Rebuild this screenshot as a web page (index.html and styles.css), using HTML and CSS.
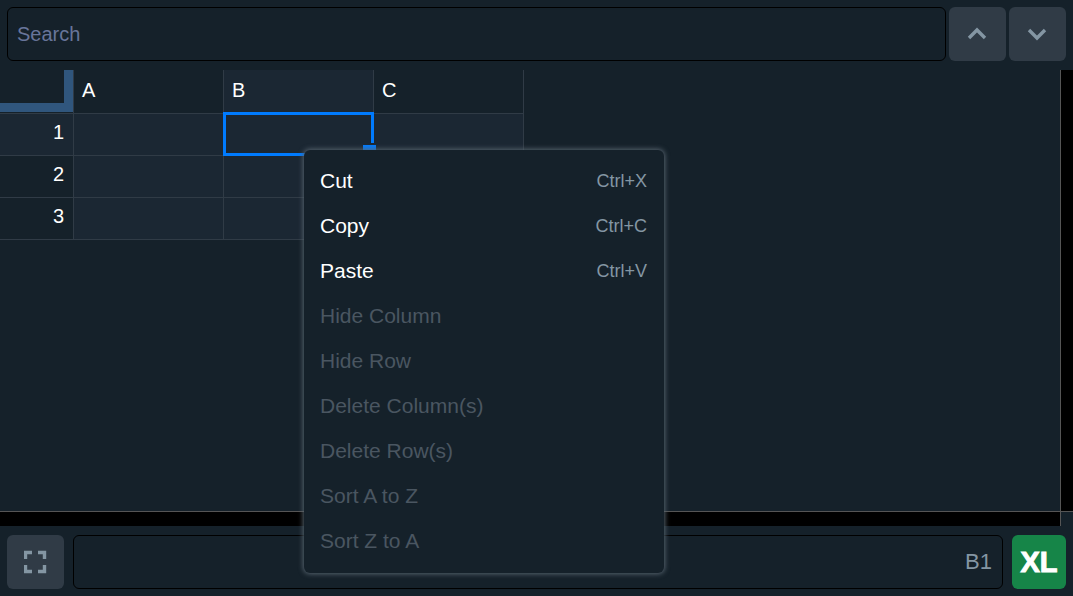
FILE: index.html
```html
<!DOCTYPE html>
<html lang="en">
    <head>
        <meta charset="utf-8">
        <title>Sheet</title>
        <meta name="viewport" content="width=device-width, initial-scale=1">
        <link rel="stylesheet" href="styles.css">
    </head>
    <body>
        <div class="toolbar">
            <input class="search" type="text" placeholder="Search" aria-label="Search">
            <button class="button" type="button" aria-label="Previous match">
                <svg width="24" height="24" viewBox="0 0 24 24"><path d="M3 16L11 8L19 16"/></svg>
            </button>
            <button class="button" type="button" aria-label="Next match">
                <svg width="24" height="24" viewBox="0 0 24 24"><path d="M3 8L11 16L19 8"/></svg>
            </button>
        </div>

        <div class="workspace">
            <div class="sheet">
                <table class="grid">
                    <thead>
                        <tr>
                            <td class="corner"><div class="cornerMark"></div></td>
                            <th class="colHead" scope="col">A</th>
                            <th class="colHead active" scope="col">B</th>
                            <th class="colHead" scope="col">C</th>
                        </tr>
                    </thead>
                    <tbody>
                        <tr>
                            <th class="rowHead active" scope="row">1</th>
                            <td></td>
                            <td class="selected"><div class="selection"><span class="handle"></span></div></td>
                            <td></td>
                        </tr>
                        <tr>
                            <th class="rowHead" scope="row">2</th>
                            <td></td>
                            <td></td>
                            <td></td>
                        </tr>
                        <tr>
                            <th class="rowHead" scope="row">3</th>
                            <td></td>
                            <td></td>
                            <td></td>
                        </tr>
                    </tbody>
                </table>
            </div>
            <div class="trackY"></div>
            <div class="trackX"></div>
            <div class="trackCorner"></div>
        </div>

        <div class="statusbar">
            <button class="button" type="button" aria-label="Fullscreen">
                <svg width="24" height="24" viewBox="0 0 24 24"><path d="M1.5 9V2.5H8M14 2.5H20.5V9M20.5 15V21.5H14M8 21.5H1.5V15"/></svg>
            </button>
            <label class="formula">
                <input type="text" aria-label="Cell value">
                <span class="cellName">B1</span>
            </label>
            <button class="logo" type="button">XL</button>
        </div>

        <div class="menu">
            <button type="button">Cut <span class="shortcut">Ctrl+X</span></button>
            <button type="button">Copy <span class="shortcut">Ctrl+C</span></button>
            <button type="button">Paste <span class="shortcut">Ctrl+V</span></button>
            <button type="button" disabled>Hide Column</button>
            <button type="button" disabled>Hide Row</button>
            <button type="button" disabled>Delete Column(s)</button>
            <button type="button" disabled>Delete Row(s)</button>
            <button type="button" disabled>Sort A to Z</button>
            <button type="button" disabled>Sort Z to A</button>
        </div>
    </body>
</html>
```
FILE: styles.css
```css
* {
    box-sizing: border-box;
    font-family: "Liberation Sans", Arial, sans-serif;
}

html, body {
    height: 100%;
    margin: 0;
}

body {
    display: flex;
    flex-direction: column;
    overflow: hidden;
    background: #15212a;
    color: #fff;
    font-size: 20px;
}

button, input {
    margin: 0;
    border: 0;
    padding: 0;
    background: none;
    color: inherit;
    font-size: 20px;
    outline: 0;
}

.toolbar, .statusbar {
    display: flex;
    flex: none;
}

.toolbar {
    gap: 3px;
    padding: 7px 7px 9px;
}

.statusbar {
    gap: 9px;
    padding: 9px 7px 7px;
}

.search, .formula {
    flex: 1;
    min-width: 0;
    height: 54px;
    border: 1px solid #000;
    border-radius: 6px;
    padding: 0 9px;
}

.search::placeholder {
    color: #68759a;
    opacity: 1;
}

.button {
    display: flex;
    align-items: center;
    justify-content: center;
    width: 57px;
    height: 54px;
    border-radius: 6px;
    background: #303b46;
}

.button svg {
    fill: none;
    stroke: #8496a3;
    stroke-width: 3.4;
}

.workspace {
    flex: 1;
    min-height: 0;
    display: grid;
    grid-template-columns: 1fr 13px;
    grid-template-rows: 1fr 15px;
}

.sheet {
    overflow: hidden;
}

.trackY {
    border-left: 1px solid #555;
    background: #000;
}

.trackX {
    border-top: 1px solid #555;
    background: #000;
}

.trackCorner {
    border-top: 1px solid #555;
    border-left: 1px solid #555;
}

.grid {
    border-collapse: separate;
    border-spacing: 0;
    table-layout: fixed;
    width: 524px;
}

.grid th, .grid td {
    height: 42px;
    border-right: 1px solid #303b46;
    border-bottom: 1px solid #303b46;
    padding: 0 8px;
    font-weight: normal;
    line-height: 24px;
}

.grid tbody td {
    background: #1b2733;
}

.grid .colHead {
    height: 44px;
    width: 150px;
    text-align: left;
    padding-bottom: 4px;
}

.grid .rowHead {
    padding-bottom: 6px;
    padding-right: 9px;
    text-align: right;
}

.grid .active {
    background: #1b2733;
}

.grid .corner {
    width: 74px;
    padding: 0 0 1px;
}

.cornerMark {
    height: 42px;
    border-right: 9px solid #30567d;
    border-bottom: 9px solid #30567d;
}

.selected {
    position: relative;
}

.selection {
    position: absolute;
    inset: -2px -1px -1px -1px;
    border: 3px solid #007bff;
}

.handle {
    position: absolute;
    right: -5px;
    bottom: -5px;
    width: 13px;
    height: 13px;
    background: #007bff;
    box-shadow: 0 0 0 2px #1b2733;
}

.formula {
    display: flex;
    align-items: center;
}

.formula input {
    flex: 1;
    min-width: 0;
}

.cellName {
    padding-right: 1px;
    color: #8496a3;
    font-size: 22px;
}

.logo {
    width: 54px;
    height: 54px;
    border-radius: 6px;
    background: #168548;
    font-size: 29px;
    font-weight: bold;
    -webkit-text-stroke: 1px #fff;
}

.menu {
    position: absolute;
    left: 304px;
    top: 150px;
    width: 360px;
    border-radius: 6px;
    padding: 9px 0;
    background: #15212a;
    box-shadow: 0 0 5px 1px #56636e;
}

.menu button {
    display: flex;
    align-items: center;
    justify-content: space-between;
    width: 100%;
    height: 45px;
    padding: 0 17px 2px 16px;
    font-size: 21px;
}

.menu button:disabled {
    color: #4a5661;
}

.shortcut {
    padding-top: 2px;
    color: #8496a3;
    font-size: 18px;
}
```
